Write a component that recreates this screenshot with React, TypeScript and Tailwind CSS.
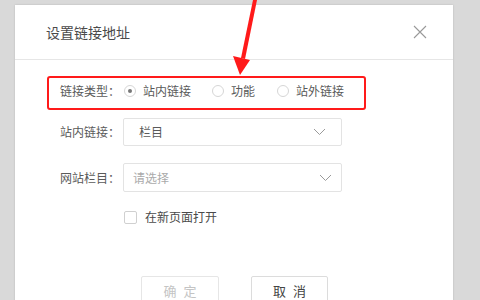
import { useState } from "react";

const font = { fontFamily: '"Noto Sans CJK SC", "Noto Sans", sans-serif' };

function Chevron() {
  return (
    <svg width="13" height="8" viewBox="0 0 13 8" fill="none">
      <path d="M1 1l5.5 5.5L12 1" stroke="#9a9a9a" strokeWidth="1" />
    </svg>
  );
}

function Radio({ checked, label }: { checked?: boolean; label: string }) {
  return (
    <div className="flex items-center">
      <span className="w-[12px] h-[12px] rounded-full border border-[#d6d6d6] flex items-center justify-center">
        {checked && <span className="w-[4px] h-[4px] rounded-full bg-[#777]" />}
      </span>
      <span className="ml-[7px] text-[12px] text-[#5a5a5a]">{label}</span>
    </div>
  );
}

export default function App() {
  const [newPage, setNewPage] = useState(false);

  return (
    <div className="relative w-[480px] h-[300px] overflow-hidden bg-[#d9d9d9] pl-[15px] pt-[5px]" style={font}>
      {/* Dialog */}
      <div className="w-[438px] h-[320px] bg-white shadow-[0_0_2px_rgba(0,0,0,0.15)]">
        <div className="h-[55px] flex items-center justify-between border-b border-[#e6e6e6] pl-[31px] pr-[26px]">
          <span className="text-[14px] text-[#4a4a4a]">设置链接地址</span>
          <svg width="14" height="14" viewBox="0 0 14 14">
            <path d="M1 1l12 12M13 1L1 13" stroke="#999" strokeWidth="1.1" />
          </svg>
        </div>

        <div className="pl-[45px] pt-[21px]">
          {/* 链接类型 */}
          <div className="flex items-center h-[20px]">
            <span className="w-[64px] text-[12px] text-[#5a5a5a]">链接类型：</span>
            <Radio checked label="站内链接" />
            <div className="ml-[21px]">
              <Radio label="功能" />
            </div>
            <div className="ml-[22px]">
              <Radio label="站外链接" />
            </div>
          </div>

          {/* 站内链接 */}
          <div className="flex items-center mt-[17px]">
            <span className="w-[63px] text-[12px] text-[#5a5a5a]">站内链接：</span>
            <div className="w-[219px] h-[28px] border border-[#e3e3e3] rounded-[2px] flex items-center justify-between pl-[15px] pr-[15px]">
              <span className="text-[12px] text-[#5a5a5a]">栏目</span>
              <Chevron />
            </div>
          </div>

          {/* 网站栏目 */}
          <div className="flex items-center mt-[17px]">
            <span className="w-[63px] text-[12px] text-[#5a5a5a]">网站栏目：</span>
            <div className="w-[219px] h-[29px] border border-[#e3e3e3] rounded-[2px] flex items-center justify-between pl-[9px] pr-[9px]">
              <span className="text-[12px] text-[#aaa]">请选择</span>
              <Chevron />
            </div>
          </div>

          {/* checkbox */}
          <label className="flex items-center mt-[16px] ml-[64px] cursor-pointer">
            <span
              onClick={() => setNewPage(!newPage)}
              className="w-[13px] h-[13px] border border-[#d0d0d0] rounded-[2px] bg-white"
            />
            <span className="ml-[8px] text-[12px] text-[#4a4a4a]">在新页面打开</span>
          </label>

          {/* buttons */}
          <div className="flex mt-[50px] ml-[81px] gap-[32px]">
            <button className="w-[78px] h-[30px] border border-[#e6e6e6] rounded-[2px] text-[13px] text-[#c4c4c4] flex items-center justify-center gap-[7px]">
              <span>确</span>
              <span>定</span>
            </button>
            <button className="w-[77px] h-[30px] border border-[#dcdcdc] rounded-[2px] text-[13px] text-[#444] flex items-center justify-center gap-[7px]">
              <span>取</span>
              <span>消</span>
            </button>
          </div>
        </div>
      </div>

      {/* annotation: red box */}
      <div className="absolute left-[47px] top-[76px] w-[319px] h-[34px] border-2 border-[#ff1a1a] rounded-[3px]" />

      {/* annotation: arrow */}
      <svg className="absolute left-0 top-0" width="480" height="300" viewBox="0 0 480 300">
        <polygon points="253,0 257,0 245,59 241,58" fill="#ff1a1a" />
        <polygon points="233,56 250,60 240,75" fill="#ff1a1a" />
      </svg>
    </div>
  );
}
